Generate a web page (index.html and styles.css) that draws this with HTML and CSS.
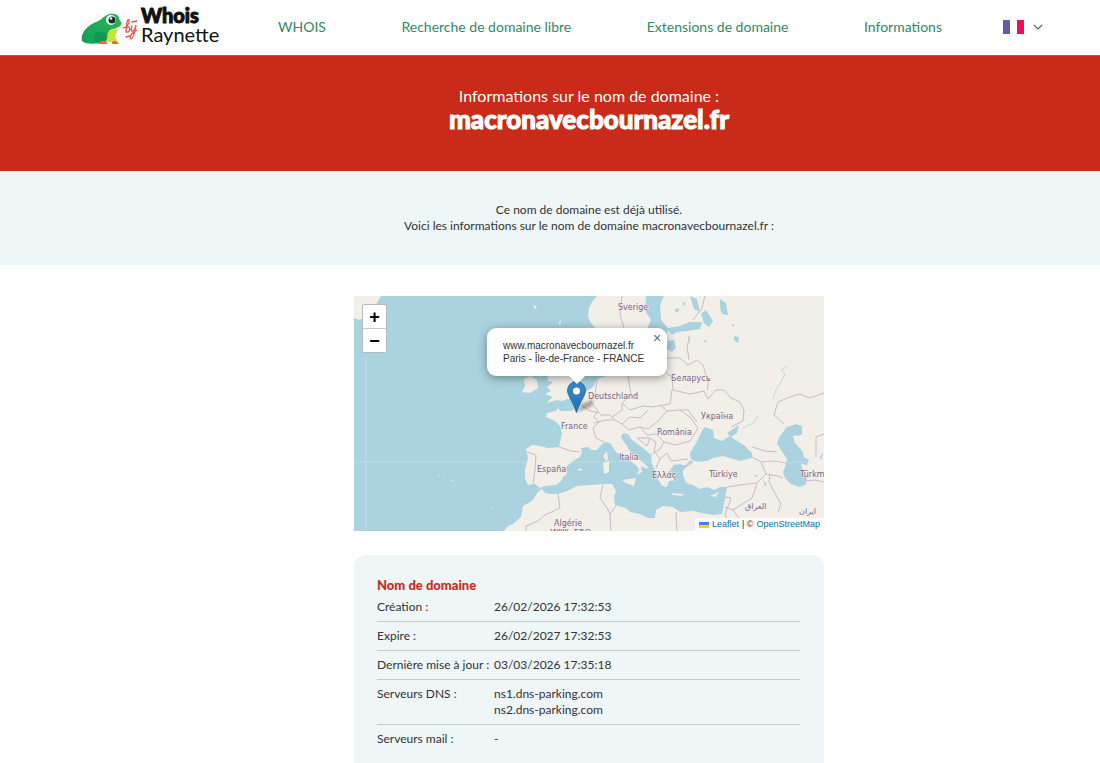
FILE: index.html
```html
<!DOCTYPE html>
<html lang="fr">
<head>
<meta charset="utf-8">
<title>Whois by Raynette</title>
<link rel="stylesheet" href="styles.css">
</head>
<body>
<header class="header">
  <a class="logo" href="#">
    <svg class="frog" viewBox="0 0 60 42" aria-hidden="true">
      <defs><linearGradient id="skin" x1="0" y1="1" x2="1" y2="0"><stop offset="0" stop-color="#10a05a"/><stop offset="1" stop-color="#2db552"/></linearGradient></defs>
      <path d="M24 27q9-6 13-4l-3 8 3 5H20z" fill="#c3e636"/>
      <path d="M1 35C-1 27 7 19 15 16c4-1 7-5 11-7 4-2 11-2 12 3 0 3 4 4 2 7-3 4-9 3-12 6-3 3 0 8-4 11-6 2-19 3-23-1z" fill="url(#skin)"/>
      <path d="M14 36c-3-8 3-12 8-10 5 1 4 7 1 10z" fill="#0e9654"/>
      <circle cx="30" cy="14" r="5" fill="#fff"/><circle cx="31" cy="14" r="3.500" fill="#163228"/><circle cx="30" cy="12.500" r="1.200" fill="#fff"/>
      <path d="M18 36q5-4 9 2h-9zM31 36q4-3 7 2h-7z" fill="#ef6540"/>
      <g fill="none" stroke="#e4574a" stroke-width="1.300" stroke-linecap="round">
        <path d="M42 22c4 0 7-6 6-8-2-2-3 7-3 12 3 1 5-3 3-5-1-1-3 1-3 3M51 20c-1 4-1 6 1 5s3-6 3-6c-1 7-2 13-5 14-3-2 2-7 6-9M51 16l5-1M45 31l4-1"/>
      </g>
    </svg>
    <span class="logo-text"><strong>Whois</strong><span>Raynette</span></span>
  </a>
  <nav class="nav">
    <a href="#">WHOIS</a>
    <a href="#">Recherche de domaine libre</a>
    <a href="#">Extensions de domaine</a>
    <a href="#">Informations</a>
  </nav>
  <button class="lang" type="button" aria-label="Langue : français">
    <span class="flag"></span>
    <svg class="chevron" viewBox="0 0 10 6" aria-hidden="true"><path d="M.8.8 5 5 9.200.8" fill="none" stroke="#555" stroke-width="1.200"/></svg>
  </button>
</header>

<section class="hero">
  <p class="hero-label">Informations sur le nom de domaine :</p>
  <h1 class="hero-title">macronavecbournazel.fr</h1>
</section>

<section class="intro">
  <p>Ce nom de domaine est déjà utilisé.</p>
  <p>Voici les informations sur le nom de domaine macronavecbournazel.fr :</p>
</section>

<main class="content">
  <div class="map">
    <svg class="tiles" viewBox="354 296 470 235" preserveAspectRatio="xMidYMid slice" aria-label="Carte">
      <g class="land">
        <path d="M354 296H381L377 303 372 307 370 314 363 318 359 320 354 318z"/>
        <path d="M597 296 592 302 589 308 588 315 590 322 597 330 606 340V376L597 379 592 388 587 391 580 396 577 403 578 408 570 411 560 411 558 408 556 411 547 413 546 417 555 421 560 426 562 433 559 447 548 448 540 446 532 445 526 449 528 458 525 470 525 479 528 485 535 484 540 488 545 486 556 485 561 481 563 477 567 474 566 467 573 461 580 457 582 452 581 448 588 447 592 450 597 450 601 445 605 442 610 443 613 447 617 453 623 456 628 459 633 463 637 466 639 470 637 475 642 472 641 466 647 469 648 467 640 460 633 456 628 448 622 439 621 436 623 433 628 434 632 440 643 448 651 455 652 464 656 472 658 479 662 486 667 487 669 481 675 480 670 474 671 468 679 465 686 465 690 460 694 462 688 466 683 470 683 475 686 483 693 485 700 489 707 487 714 490 720 487 727 487 725 499 722 514 713 515 707 514 693 511 680 512 673 507 663 506 656 510 655 518 648 518 640 514 630 512 626 508 615 505 614 496 616 491 612 484 603 484 590 485 577 486 567 491 558 494 550 494 545 493 542 489 538 492 532 501 523 506 521 517 513 524 508 526 504 531H824V296z"/>
        <path d="M524 379 531 376 537 380 538 388 530 393 522 392 525 386z"/>
        <path d="M547 372 548 381 553 382 547 387 551 391 545 394 553 397 546 403 557 400 562 401 567 399 580 399 584 390 576 388 571 376z"/>
        <path d="M603 456 607 451 608 459 606 461zM603 463 609 461 609 472 604 474zM622 480 636 478 634 486 626 483zM577 470 581 468 582 471zM671 493 684 494 682 496 673 495zM710 496 719 492 716 497zM533 305 537 306 535 310zM559 322 561 320 560 326z"/>
      </g>
      <g class="water">
        <path d="M646 296H664L660 305 661 320 668 328 680 326 690 322 702 322 700 329 687 331 677 332 672 335 668 330 661 345 646 331 651 320 645 310z"/>
        <path d="M668 341 674 340 676 348 672 352 667 349zM701 314 706 310 713 321 709 327 704 323zM720 299 726 303 728 315 722 314 720 308zM734 336 739 337 738 343 734 340zM704 340 707 341 705 343zM732 324 735 325 733 327zM690 296 697 299 700 312 694 309zM682 301 686 304 684 306zM674 310 679 308 678 313zM688 335 690 337 689 345z"/>
        <path d="M705 427 713 430 714 438 722 441 730 436 727 433 739 425 737 433 731 437 745 446 752 453 752 458 740 461 723 456 713 458 707 461 697 462 691 459 690 453 695 445 698 439 702 431z"/>
        <path d="M787 427 796 424 802 426 802 435 793 436 795 443 803 452 804 457 809 460 807 465 801 464 804 474 807 479 806 484 800 487 791 484 785 478 783 472 785 467 787 459 781 450 777 443 780 436z"/>
        <path d="M673 465 682 464 681 474 685 486 679 487 673 478z"/>
        <path d="M754 475 758 475 756 477zM763 480 767 485 765 486zM820 456 823 453 821 461z"/>
      </g>
      <path class="river" d="M787 366 781 370 785 374 781 382 776 390 773 399M743 428 753 423 758 416"/>
      <path class="islet" d="M438 476l2-1M444 475l2-1M451 480l3 1M490 508h2"/>
      <path class="border" d="M622 296 620 315 624 328M559 447 571 451 580 452M527 452 536 455 535 470 533 484M705 296 702 308 693 320M690 337 687 346 689 360M667 358 680 358 688 365 697 360 703 365 706 375 709 380 707 390M667 374 672 377 673 390 690 394 704 391 708 399 716 390 724 390 731 398 740 402 744 410 743 421 731 427M628 376 631 395 622 403 630 410 643 406 652 407 670 404 672 390M597 380 595 394 590 401 598 411 594 417 599 422 593 428 596 438 604 442M578 403 590 411 600 413M594 423 606 420 615 420 622 424 630 417 640 418 648 410M615 420 610 415 600 415M622 403 622 410 612 417M622 424 629 430 640 427 648 429 658 421 667 411 660 405M640 427 647 435 656 434 664 442 675 445 690 441M637 438 650 438 647 446 637 438M650 438 656 442 654 451 660 459 667 453 671 461 688 459M651 455 660 449 664 442M660 459 656 468M667 411 680 410 690 417 698 428 690 441M680 410 688 410 697 422M752 447 765 451 777 452M752 457 761 462 766 474M761 462 774 461 786 463M727 487 740 485 757 483 766 474 778 476 783 478M770 474 769 482 776 495 781 504 778 512M757 484 752 498 733 510 725 507M733 510 744 525 758 531M725 497 731 498 725 515 731 531M558 494 560 508 545 515 538 521 526 526 526 531M603 484 600 498 607 508 610 514 611 531M616 506 610 514M676 512 677 531M774 415 778 402 790 397 800 394 810 398 824 393M774 415 784 424M816 457 816 437 824 434M804 481 815 480 824 482"/>
      <path class="grid-line" d="M366 296V531M767 296V531M354 462H824"/>
      <g class="place">
        <text x="618" y="310">Sverige</text><text x="588" y="399">Deutschland</text><text x="671" y="381">Беларусь</text><text x="701" y="419">Україна</text><text x="561" y="429">France</text><text x="657" y="435">România</text><text x="619" y="460">Italia</text><text x="537" y="472">España</text><text x="652" y="478">Ελλάς</text><text x="709" y="477">Türkiye</text><text x="800" y="477">Türkm</text><text x="554" y="526">Algérie</text><text x="550" y="535">ⵍⵣⵣⴰⵢⴻⵔ</text><text x="745" y="509">العراق</text><text x="799" y="514">ایران</text>
      </g>
    </svg>
    <div class="zoom">
      <button type="button" aria-label="Zoom avant">+</button>
      <button type="button" aria-label="Zoom arrière">−</button>
    </div>
    <svg class="pin" viewBox="0 0 42 32" aria-hidden="true">
      <defs><linearGradient id="pin" x2="0" y2="1"><stop stop-color="#3b8ac9"/><stop offset="1" stop-color="#1f6fb2"/></linearGradient><filter id="soft"><feGaussianBlur stdDeviation="1.500"/></filter></defs>
      <path d="M21 31 27 22 38 19 35 26z" fill="#333" opacity=".4" filter="url(#soft)"/>
      <path d="M20.500.5a9 9 0 0 0-9 9c0 5 5 10 9 22 4-12 9-17 9-22a9 9 0 0 0-9-9z" fill="url(#pin)" stroke="#2b72ad"/>
      <circle cx="20.500" cy="10" r="3.500" fill="#fff"/>
    </svg>
    <div class="popup">
      <p>www.macronavecbournazel.fr</p>
      <p>Paris - Île-de-France - FRANCE</p>
      <button class="close" type="button" aria-label="Fermer">×</button>
    </div>
    <div class="attribution"><span class="ua"></span><a href="#">Leaflet</a> | © <a href="#">OpenStreetMap</a></div>
  </div>

  <section class="card">
    <h2>Nom de domaine</h2>
    <table class="details">
      <tr><th scope="row">Création :</th><td>26/02/2026 17:32:53</td></tr>
      <tr><th scope="row">Expire :</th><td>26/02/2027 17:32:53</td></tr>
      <tr><th scope="row">Dernière mise à jour :</th><td>03/03/2026 17:35:18</td></tr>
      <tr><th scope="row">Serveurs DNS :</th><td>ns1.dns-parking.com<br>ns2.dns-parking.com</td></tr>
      <tr><th scope="row">Serveurs mail :</th><td>-</td></tr>
    </table>
  </section>
</main>
</body>
</html>
```
FILE: styles.css
```css
* { box-sizing: border-box; }
html { overflow: hidden; }
body { margin: 0; background: #fff; color: #333; font: 12px/16px Lato, "Noto Sans", sans-serif; }
p, h1, h2 { margin: 0; }
a { text-decoration: none; }
button { font: inherit; border: 0; padding: 0; background: none; cursor: pointer; }

.header { display: flex; align-items: center; height: 56px; padding: 0 57px 2px 81px; border-bottom: 1px solid #c9503f; }
.logo { display: flex; align-items: center; width: 197px; color: #111; }
.frog { width: 60px; height: 42px; flex: none; }
.logo-text { display: flex; flex-direction: column; padding-bottom: 4px; font-size: 20px; line-height: 19px; }
.logo-text strong { font-weight: 900; -webkit-text-stroke: 1px #111; }
.nav { display: flex; flex: 1; justify-content: space-between; font-size: 14px; line-height: 20px; }
.nav a { color: #2f8a68; }
.lang { display: flex; align-items: center; gap: 9px; margin-left: 61px; }
.flag { width: 21px; height: 14px; background: linear-gradient(90deg, #6559a8 0 33%, #fff 33% 66%, #f40a5c 66%); }
.chevron { width: 10px; height: 6px; }

.hero { height: 115px; padding: 29px 0 0 78px; background: #ca2a19; color: #fff; text-align: center; }
.hero-label { font-size: 16px; line-height: 22px; }
.hero-title { font-size: 26px; line-height: 24px; font-weight: 900; -webkit-text-stroke: 1px #fff; }
.intro { padding: 31px 0 31px 78px; background: #eef6f8; text-align: center; }

.content { padding: 31px 0 0 78px; }
.map, .card { width: 100%; max-width: 470px; margin: 0 auto; }
.map { position: relative; height: 235px; overflow: hidden; background: #aad3df; font-family: "Liberation Sans", Arial, sans-serif; }
.tiles { display: block; width: 100%; height: 100%; }
.land { fill: #f2efe9; }
.water { fill: #aad3df; }
.border { fill: none; stroke: #cdb9ca; stroke-width: 1; stroke-linejoin: round; }
.river { fill: none; stroke: #b5dbe3; stroke-width: 1; }
.islet { fill: none; stroke: #d5e6e8; stroke-width: 1; }
.grid-line { fill: none; stroke: #fff; stroke-opacity: .2; }
.place { fill: #7c6285; font: 8px "DejaVu Sans", "Noto Sans", sans-serif; paint-order: stroke; stroke: #f2efe9; stroke-width: 1px; }
.zoom { position: absolute; top: 8px; left: 8px; display: flex; flex-direction: column; border: 1px solid #b0bcc0; border-radius: 2px; background: #fff; }
.zoom button { width: 23px; height: 23px; color: #000; font: bold 18px/22px "Liberation Sans", sans-serif; }
.zoom button + button { height: 24px; border-top: 1px solid #ccc; }
.pin { position: absolute; top: 85px; left: 202px; width: 42px; height: 32px; }
.popup { position: absolute; top: 32px; left: 133px; width: 180px; padding: 11px 16px; border-radius: 9px; background: #fff; box-shadow: 0 2px 10px rgba(0, 0, 0, .4); font-size: 10px; line-height: 13px; white-space: nowrap; }
.popup::after { content: ""; position: absolute; top: 100%; left: 82px; border: 8px solid transparent; border-top-color: #fff; border-bottom: 0; }
.close { position: absolute; top: 3px; right: 3px; width: 14px; height: 14px; color: #666; font-size: 14px; line-height: 14px; }
.attribution { position: absolute; right: 0; bottom: 0; display: flex; align-items: center; gap: 3px; padding: 0 4px; background: rgba(255, 255, 255, .8); font-size: 9px; line-height: 13px; }
.attribution a { color: #0078a8; }
.ua { width: 10px; height: 6px; background: linear-gradient(#4c7be1 50%, #ffd500 50%); }

.card { margin-top: 24px; padding: 22px 24px 32px 23px; border-radius: 12px; background: #eef6f8; }
.card h2 { color: #c92c20; font-size: 13px; line-height: 16px; font-weight: 900; }
.details { width: 100%; border-collapse: separate; border-spacing: 0; }
.details th, .details td { padding: 6px 0; border-bottom: 1px solid #c3cdd1; text-align: left; vertical-align: top; font-weight: 400; }
.details th { width: 117px; }
.details tr:last-child > * { border-bottom: 0; }
```
